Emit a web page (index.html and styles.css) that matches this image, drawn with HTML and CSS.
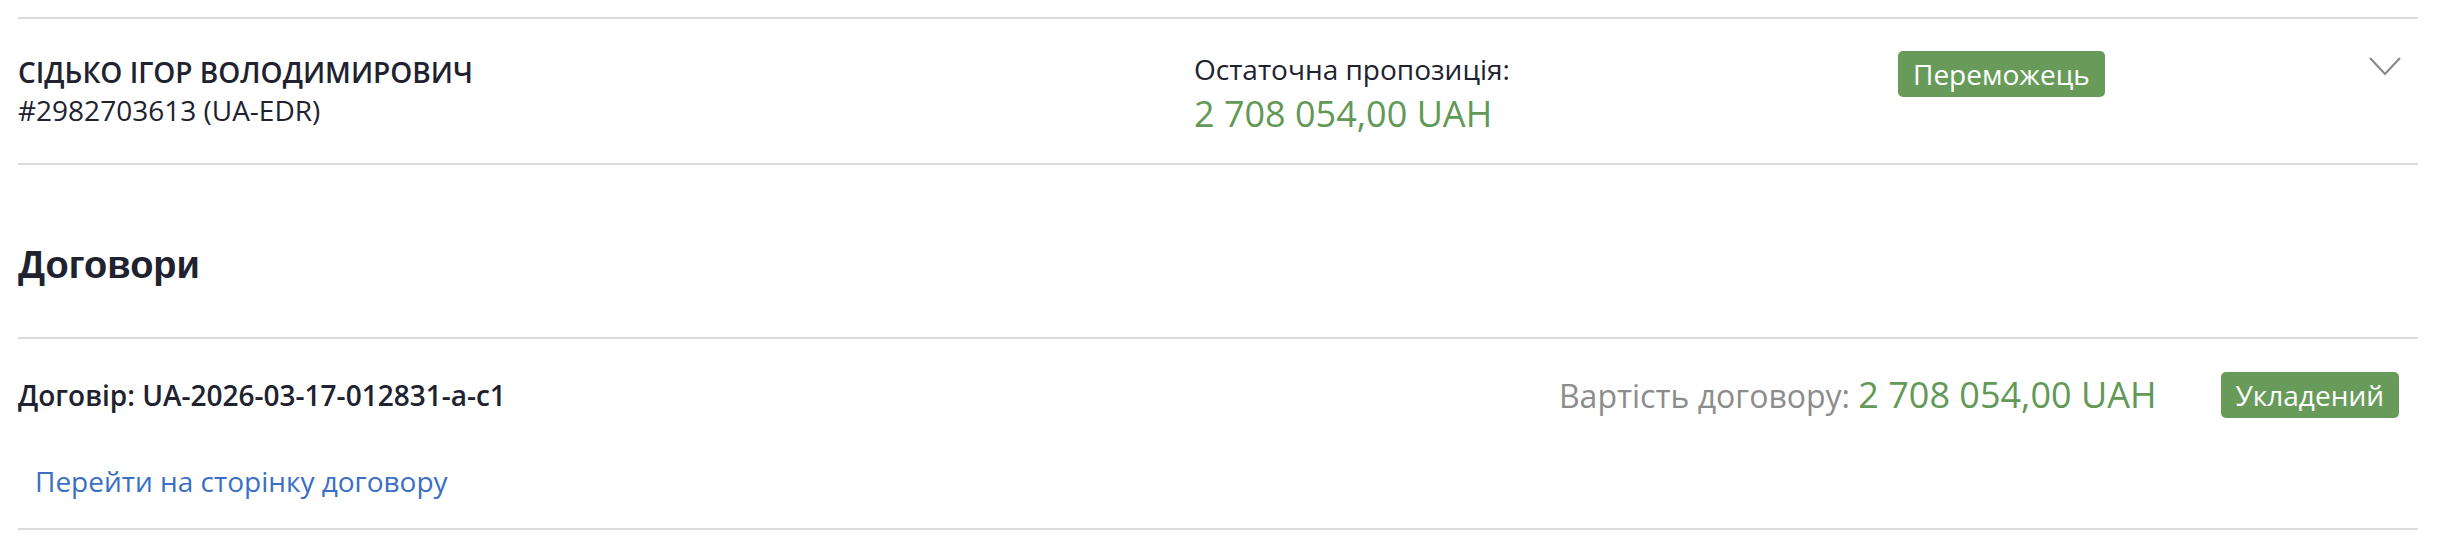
FILE: index.html
```html
<!DOCTYPE html>
<html lang="uk">
<head>
<meta charset="utf-8">
<link rel="stylesheet" href="styles.css">
</head>
<body>
<div class="page">
  <div class="bid">
    <div class="bidder">
      <div class="bidder-name">СІДЬКО ІГОР ВОЛОДИМИРОВИЧ</div>
      <div class="bidder-id">#2982703613 (UA-EDR)</div>
    </div>
    <div class="offer">
      <div class="offer-label">Остаточна пропозиція:</div>
      <div class="amount offer-amount">2 708 054,00 UAH</div>
    </div>
    <div class="status">
      <span class="badge">Переможець</span>
    </div>
    <div class="toggle">
      <svg class="chevron" width="34" height="20" viewBox="0 0 34 20"><path d="M2 2 L17 18 L32 2" fill="none" stroke="#8a8a8a" stroke-width="2.2"/></svg>
    </div>
  </div>

  <h2 class="section-title">Договори</h2>

  <div class="contract">
    <div class="contract-row">
      <div class="contract-title">Договір: UA-2026-03-17-012831-a-c1</div>
      <div class="contract-value"><span class="value-label">Вартість договору:</span> <span class="amount">2 708 054,00 UAH</span></div>
      <span class="badge">Укладений</span>
    </div>
    <a class="contract-link" href="#">Перейти на сторінку договору</a>
  </div>
</div>
</body>
</html>
```

FILE: styles.css
```css
* { box-sizing: border-box; }
html, body { margin: 0; padding: 0; background: #ffffff; }
body {
  font-family: "Open Sans", "Noto Sans", sans-serif;
  color: #21222f;
  font-size: 28px;
}
.page {
  width: 2400px;
  margin: 17px 0 0 18px;
}
.bid {
  display: grid;
  grid-template-columns: 1176px 704px 1fr auto;
  border-top: 2px solid #dcdcdc;
  border-bottom: 2px solid #dcdcdc;
  padding: 34px 0 33px;
}
.bidder-name {
  font-weight: 600;
  line-height: 38px;
}
.bidder-id {
  line-height: 38px;
}
.offer {
  margin: -3px 0 -9px;
}
.offer-label {
  line-height: 39px;
}
.amount {
  color: #629956;
  font-size: 36px;
  line-height: 50px;
}
.status { display: flex; align-items: flex-start; }
.badge {
  display: inline-block;
  background: #689b5a;
  color: #ffffff;
  border-radius: 5px;
  padding: 4px 15px 4px;
  line-height: 38px;
  font-size: 28px;
}
.status .badge { margin-top: -2px; }
.toggle { padding: 3px 16px 0 0; }
.chevron { display: block; }
.section-title {
  font-family: "Liberation Sans", Arial, sans-serif;
  font-weight: 700;
  font-size: 38px;
  line-height: 46px;
  margin: 0;
  padding: 77px 0 49px;
}
.contract {
  border-top: 2px solid #dcdcdc;
  border-bottom: 2px solid #dcdcdc;
  padding: 31px 19px 28px 0;
}
.contract-row {
  display: flex;
  align-items: center;
  height: 49px;
}
.contract-title {
  font-weight: 600;
  flex: 1;
}
.contract-value {
  font-size: 32px;
  line-height: 49px;
  margin-right: 64px;
}
.value-label { color: #8c8c8c; }
.contract-value .amount { font-size: 36px; line-height: 49px; }
.contract-link {
  display: block;
  margin: 43px 0 0 17px;
  color: #3a6fc4;
  text-decoration: none;
  line-height: 38px;
}
```
